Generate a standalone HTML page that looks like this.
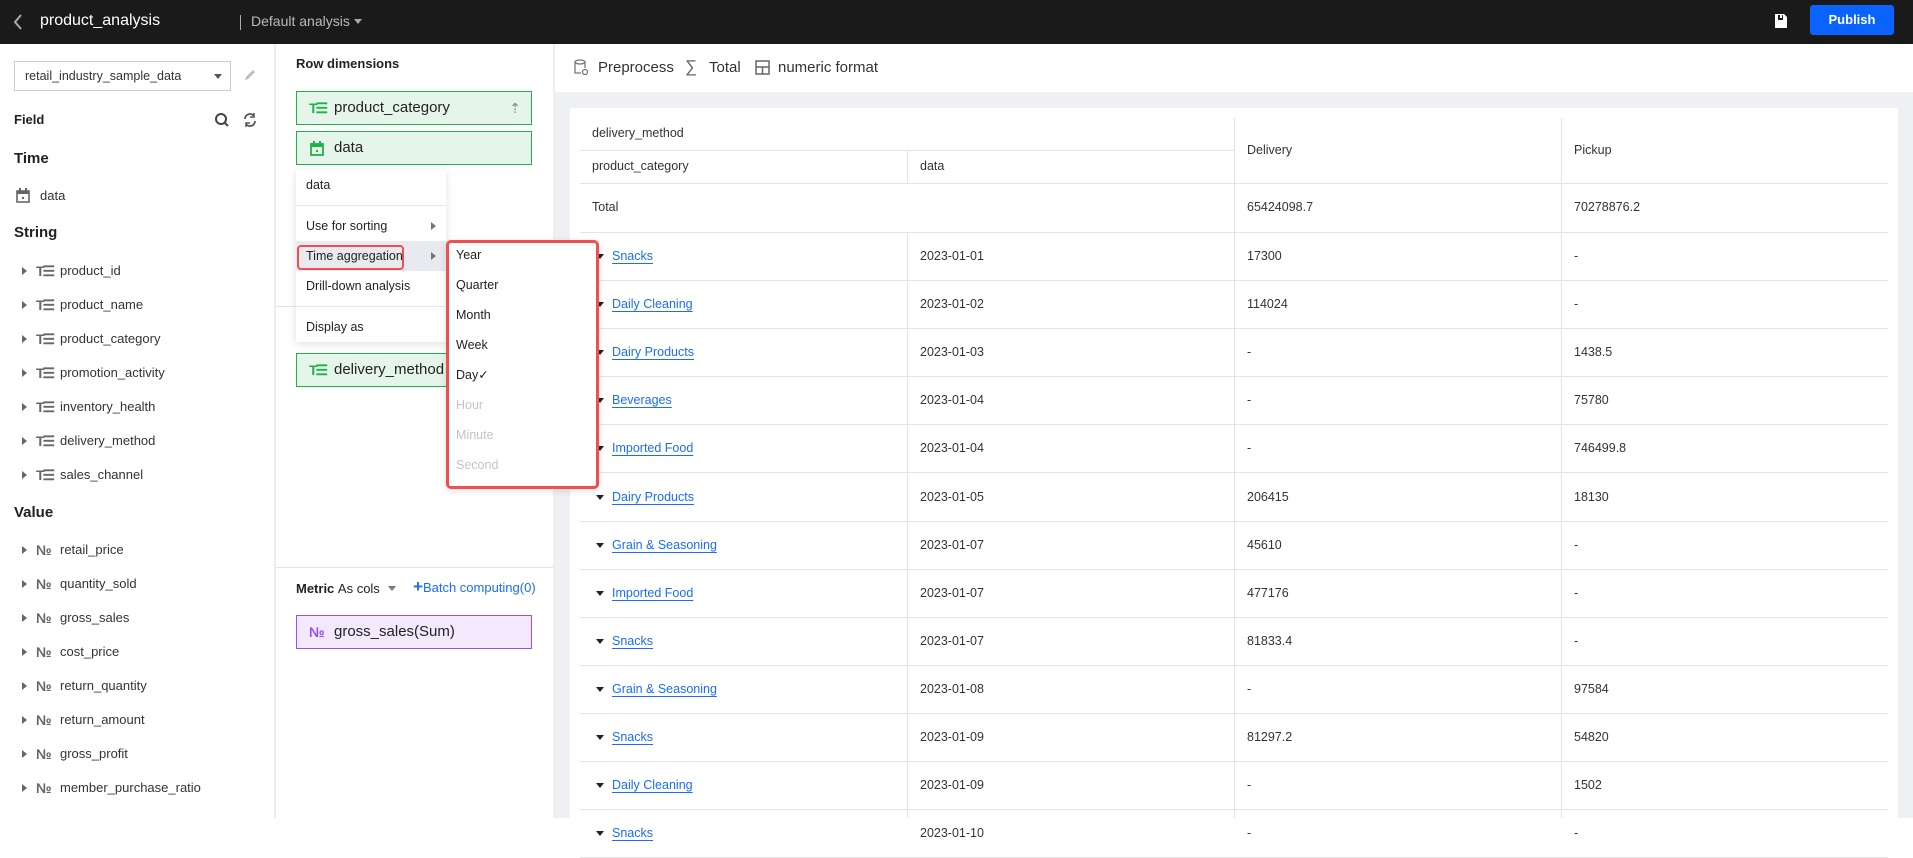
<!DOCTYPE html>
<html><head><meta charset="utf-8"><style>
*{box-sizing:border-box;margin:0;padding:0}
body{width:1913px;height:818px;overflow:hidden;background:#fff;font-family:"Liberation Sans",sans-serif;font-size:13px;color:#222;position:relative}
.a{position:absolute;white-space:nowrap}
.hdr{left:0;top:0;width:1913px;height:44px;background:#1a1a1a}
.fld{left:0;height:20px;line-height:20px;font-size:13px;color:#333}
.fld .ar{position:absolute;left:22px;top:6px;border-left:5px solid #666;border-top:4px solid transparent;border-bottom:4px solid transparent}
.fld .ic{position:absolute;left:36px;top:0;font-size:14px;color:#666;font-weight:bold;letter-spacing:-2px}
.fld .t{position:absolute;left:60px}
.sec{left:14px;font-weight:bold;font-size:15px;color:#222}
.box{left:296px;width:236px;height:34px;border:1px solid #1fb24a;background:#e5f5ea;line-height:32px;font-size:15px;color:#222;padding-left:36px}
.box .ic{position:absolute;left:12px;top:0;color:#1fb24a;font-weight:bold;font-size:14px;letter-spacing:-2px}
.mi{left:296px;width:150px;padding-left:10px;height:30px;line-height:30px;font-size:12.5px;color:#222}
.si{left:456px;font-size:12.5px;color:#222;height:30px;line-height:30px}
.hl{left:580px;width:1308px;height:1px;background:#e3e3e3}
.vl{width:1px;background:#e3e3e3}
.c{font-size:12.5px;color:#333;line-height:16px}
.lk{color:#1a6cff;text-decoration:underline;text-underline-offset:3px}
.tri{border-top:5px solid #222;border-left:4px solid transparent;border-right:4px solid transparent}
</style></head><body>
<div class="a hdr"></div>
<svg class="a" style="left:12px;top:13px" width="12" height="18"><path d="M9 2 L3 9 L9 16" stroke="#aaa" stroke-width="2" fill="none"/></svg>
<div class="a" style="left:40px;top:12px;font-size:16px;color:#fff">product_analysis</div>
<div class="a" style="left:240px;top:15px;width:1px;height:15px;background:#aaa"></div>
<div class="a" style="left:251px;top:13px;font-size:14px;color:#bbb">Default analysis</div>
<div class="a tri" style="left:354px;top:19px;border-top-color:#aaa"></div>
<svg class="a" style="left:1773px;top:12px" width="16" height="18"><path d="M2 2 H11 L14 5 V16 H2 Z" fill="#fff"/><rect x="5" y="3" width="5" height="5" fill="#1a1a1a"/><rect x="7" y="3" width="2" height="3" fill="#fff"/></svg>
<div class="a" style="left:1810px;top:5px;width:84px;height:30px;background:#0a63ff;border-radius:3px;color:#fff;font-weight:bold;font-size:13px;line-height:30px;text-align:center">Publish</div>

<!-- left panel -->
<div class="a" style="left:274px;top:44px;width:2px;height:774px;background:#eee"></div>
<div class="a" style="left:14px;top:61px;width:217px;height:30px;border:1px solid #ccd;line-height:28px;padding-left:10px;font-size:12.5px;color:#333">retail_industry_sample_data</div>
<div class="a tri" style="left:214px;top:74px;border-top-color:#555"></div>
<svg class="a" style="left:243px;top:68px" width="14" height="14"><path d="M2 12 L3 9 L10 2 L12 4 L5 11 Z" fill="#bbb"/></svg>
<div class="a sec" style="top:112px;font-size:13px">Field</div>
<svg class="a" style="left:214px;top:112px" width="16" height="16"><circle cx="7" cy="7" r="5" stroke="#444" stroke-width="2" fill="none"/><path d="M11 11 L14 14" stroke="#444" stroke-width="2"/></svg>
<svg class="a" style="left:242px;top:112px" width="16" height="16"><path d="M3 7 A5 5 0 0 1 12 4 M13 9 A5 5 0 0 1 4 12" stroke="#555" stroke-width="1.8" fill="none"/><path d="M12 1 V5 H8 M4 15 V11 H8" stroke="#555" stroke-width="1.5" fill="none"/></svg>
<div class="a sec" style="top:150px">Time</div>
<svg class="a" style="left:16px;top:188px" width="14" height="15"><rect x="1" y="3" width="12" height="11" fill="none" stroke="#666" stroke-width="1.6"/><rect x="1" y="3" width="12" height="3" fill="#666"/><rect x="3" y="0" width="2" height="4" fill="#666"/><rect x="9" y="0" width="2" height="4" fill="#666"/><rect x="6" y="9" width="2" height="2" fill="#666"/></svg>
<div class="a fld" style="top:186px"><span class="t" style="left:40px">data</span></div>
<div class="a sec" style="top:224px">String</div>
<div class="a fld" style="top:261px"><i class="ar"></i><span class="ic">T☰</span><span class="t">product_id</span></div>
<div class="a fld" style="top:295px"><i class="ar"></i><span class="ic">T☰</span><span class="t">product_name</span></div>
<div class="a fld" style="top:329px"><i class="ar"></i><span class="ic">T☰</span><span class="t">product_category</span></div>
<div class="a fld" style="top:363px"><i class="ar"></i><span class="ic">T☰</span><span class="t">promotion_activity</span></div>
<div class="a fld" style="top:397px"><i class="ar"></i><span class="ic">T☰</span><span class="t">inventory_health</span></div>
<div class="a fld" style="top:431px"><i class="ar"></i><span class="ic">T☰</span><span class="t">delivery_method</span></div>
<div class="a fld" style="top:465px"><i class="ar"></i><span class="ic">T☰</span><span class="t">sales_channel</span></div>
<div class="a sec" style="top:504px">Value</div>
<div class="a fld" style="top:540px"><i class="ar"></i><span class="ic">№</span><span class="t">retail_price</span></div>
<div class="a fld" style="top:574px"><i class="ar"></i><span class="ic">№</span><span class="t">quantity_sold</span></div>
<div class="a fld" style="top:608px"><i class="ar"></i><span class="ic">№</span><span class="t">gross_sales</span></div>
<div class="a fld" style="top:642px"><i class="ar"></i><span class="ic">№</span><span class="t">cost_price</span></div>
<div class="a fld" style="top:676px"><i class="ar"></i><span class="ic">№</span><span class="t">return_quantity</span></div>
<div class="a fld" style="top:710px"><i class="ar"></i><span class="ic">№</span><span class="t">return_amount</span></div>
<div class="a fld" style="top:744px"><i class="ar"></i><span class="ic">№</span><span class="t">gross_profit</span></div>
<div class="a fld" style="top:778px"><i class="ar"></i><span class="ic">№</span><span class="t">member_purchase_ratio</span></div>

<!-- middle panel -->
<div class="a" style="left:553px;top:44px;width:2px;height:774px;background:#eee"></div>
<div class="a" style="left:296px;top:56px;font-weight:bold;font-size:13px">Row dimensions</div>
<div class="a box" style="top:91px;padding-left:37px"><span class="ic">T☰</span>product_category<span style="position:absolute;right:10px;top:0;color:#888;font-size:14px">⇡</span></div>
<div class="a box" style="top:131px;padding-left:37px"><svg style="position:absolute;left:13px;top:9px" width="14" height="15"><rect x="1" y="3" width="12" height="11" fill="none" stroke="#1fb24a" stroke-width="1.8"/><rect x="1" y="3" width="12" height="3" fill="#1fb24a"/><rect x="3" y="0" width="2" height="4" fill="#1fb24a"/><rect x="9" y="0" width="2" height="4" fill="#1fb24a"/><rect x="6" y="9" width="2" height="2" fill="#1fb24a"/></svg>data</div>
<div class="a" style="left:276px;top:306px;width:277px;height:1px;background:#e3e3e8"></div>
<div class="a box" style="top:353px;padding-left:37px"><span class="ic">T☰</span>delivery_method</div>
<div class="a" style="left:276px;top:567px;width:277px;height:1px;background:#e3e3e8"></div>
<div class="a" style="left:296px;top:581px;font-weight:bold;font-size:13px">Metric <span style="font-weight:normal">As cols</span></div>
<div class="a tri" style="left:388px;top:586px;border-top-color:#777"></div>
<div class="a" style="left:413px;top:580px;color:#1a6cff;font-size:13px"><b style="font-size:17px;line-height:14px">+</b>Batch computing(0)</div>
<div class="a box" style="top:615px;border-color:#9b4ff0;background:#f2e9fd;padding-left:37px"><span class="ic" style="color:#9b4ff0">№</span>gross_sales(Sum)</div>

<!-- right toolbar -->
<div class="a" style="left:555px;top:92px;width:1358px;height:726px;background:#eff0f4"></div>
<svg class="a" style="left:573px;top:59px" width="16" height="18"><ellipse cx="7" cy="3" rx="5" ry="2" fill="none" stroke="#777" stroke-width="1.3"/><path d="M2 3 V14 H8 M12 3 V9" stroke="#777" stroke-width="1.3" fill="none"/><circle cx="12" cy="13" r="2.5" stroke="#777" stroke-width="1.3" fill="none"/></svg>
<div class="a" style="left:598px;top:59px;font-size:15px;color:#333">Preprocess</div>
<div class="a" style="left:685px;top:57px;font-size:17px;color:#666">∑</div>
<div class="a" style="left:709px;top:59px;font-size:15px;color:#333">Total</div>
<svg class="a" style="left:755px;top:60px" width="15" height="15"><rect x="1" y="1" width="13" height="13" fill="none" stroke="#666" stroke-width="1.5"/><path d="M1 7 H14 M7.5 7 V14" stroke="#666" stroke-width="1.5"/></svg>
<div class="a" style="left:778px;top:59px;font-size:15px;color:#333">numeric format</div>

<!-- table card -->
<div class="a" style="left:570px;top:108px;width:1328px;height:710px;background:#fff"></div>
<div class="a vl" style="left:1234px;top:118px;height:700px"></div>
<div class="a vl" style="left:1561px;top:118px;height:700px"></div>
<div class="a vl" style="left:907px;top:150px;height:33px"></div>
<div class="a" style="left:580px;top:150px;width:654px;height:1px;background:#e3e3e3"></div>
<div class="a hl" style="top:183px"></div>
<div class="a hl" style="top:232px"></div>
<div class="a c" style="left:592px;top:125px">delivery_method</div>
<div class="a c" style="left:592px;top:158px">product_category</div>
<div class="a c" style="left:920px;top:158px">data</div>
<div class="a c" style="left:1247px;top:142px">Delivery</div>
<div class="a c" style="left:1574px;top:142px">Pickup</div>
<div class="a c" style="left:592px;top:199px">Total</div>
<div class="a c" style="left:1247px;top:199px">65424098.7</div>
<div class="a c" style="left:1574px;top:199px">70278876.2</div>
<div class="a vl" style="left:907px;top:232px;height:586px"></div>
<div id="rows"></div>
<script>
var d=[["Snacks","2023-01-01","17300","-"],["Daily Cleaning","2023-01-02","114024","-"],["Dairy Products","2023-01-03","-","1438.5"],["Beverages","2023-01-04","-","75780"],["Imported Food","2023-01-04","-","746499.8"],["Dairy Products","2023-01-05","206415","18130"],["Grain &amp; Seasoning","2023-01-07","45610","-"],["Imported Food","2023-01-07","477176","-"],["Snacks","2023-01-07","81833.4","-"],["Grain &amp; Seasoning","2023-01-08","-","97584"],["Snacks","2023-01-09","81297.2","54820"],["Daily Cleaning","2023-01-09","-","1502"],["Snacks","2023-01-10","-","-"]];
var h="";d.forEach(function(r,i){var y=232+48.1*i;var t=y+16;
h+='<div class="a hl" style="top:'+Math.round(y+48)+'px"></div>';
h+='<div class="a tri" style="left:596px;top:'+Math.round(t+6)+'px"></div>';
h+='<div class="a c lk" style="left:612px;top:'+Math.round(t)+'px">'+r[0]+'</div>';
h+='<div class="a c" style="left:920px;top:'+Math.round(t)+'px">'+r[1]+'</div>';
h+='<div class="a c" style="left:1247px;top:'+Math.round(t)+'px">'+r[2]+'</div>';
h+='<div class="a c" style="left:1574px;top:'+Math.round(t)+'px">'+r[3]+'</div>';});
document.getElementById("rows").innerHTML=h;
</script>

<!-- context menu -->
<div class="a" style="left:296px;top:170px;width:150px;height:172px;background:#fff;box-shadow:0 2px 8px rgba(0,0,0,.12)"></div>
<div class="a mi" style="top:170px">data</div>
<div class="a" style="left:296px;top:205px;width:150px;height:1px;background:#e6e6ea"></div>
<div class="a mi" style="top:211px">Use for sorting</div>
<div class="a" style="left:431px;top:222px;border-left:5px solid #777;border-top:4px solid transparent;border-bottom:4px solid transparent"></div>
<div class="a" style="left:296px;top:241px;width:150px;height:30px;background:#e8eaef"></div>
<div class="a mi" style="top:241px">Time aggregation</div>
<div class="a" style="left:431px;top:252px;border-left:5px solid #777;border-top:4px solid transparent;border-bottom:4px solid transparent"></div>
<div class="a" style="left:297px;top:245px;width:107px;height:25px;border:2px solid #f04f4f;border-radius:4px"></div>
<div class="a mi" style="top:271px">Drill-down analysis</div>
<div class="a" style="left:296px;top:306px;width:150px;height:1px;background:#e6e6ea"></div>
<div class="a mi" style="top:312px">Display as</div>

<!-- submenu -->
<div class="a" style="left:446px;top:240px;width:153px;height:249px;background:#fff;border:3px solid #f04f4f;border-radius:5px;box-shadow:0 2px 8px rgba(0,0,0,.12)"></div>
<div class="a si" style="top:240px">Year</div>
<div class="a si" style="top:270px">Quarter</div>
<div class="a si" style="top:300px">Month</div>
<div class="a si" style="top:330px">Week</div>
<div class="a si" style="top:360px">Day✓</div>
<div class="a si" style="top:390px;color:#c4c4c4">Hour</div>
<div class="a si" style="top:420px;color:#c4c4c4">Minute</div>
<div class="a si" style="top:450px;color:#c4c4c4">Second</div>
</body></html>
